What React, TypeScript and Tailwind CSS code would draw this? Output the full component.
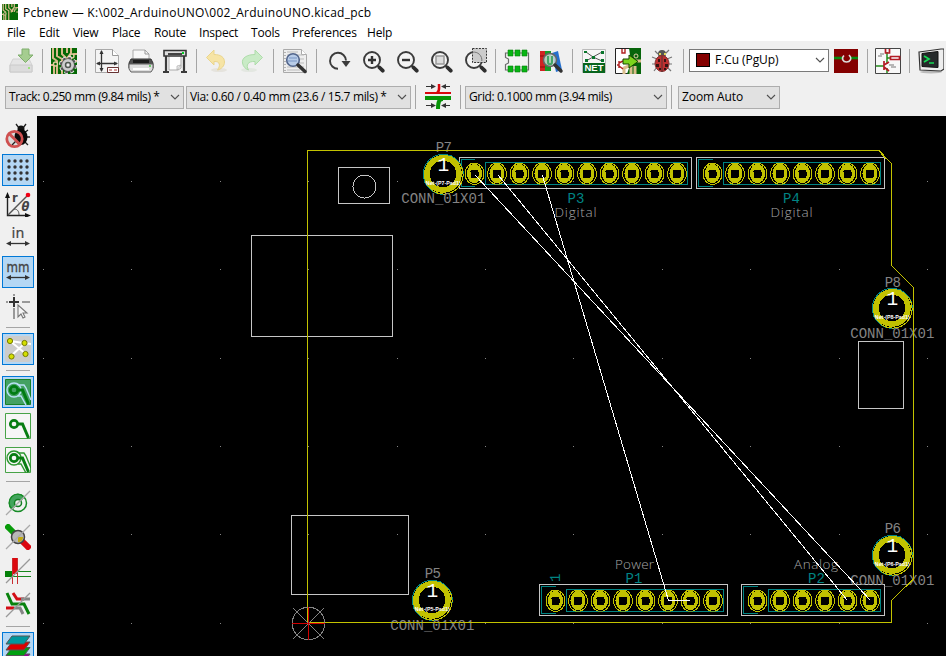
import React from 'react';

type Kids = { children?: React.ReactNode };

const Icon = ({ children }: Kids) => (
  <svg width="26" height="26" viewBox="0 0 26 26" fill="none" className="block shrink-0">{children}</svg>
);

const Tool = ({ children }: Kids) => (
  <div className="flex h-[34px] w-[34px] shrink-0 items-center justify-center"><Icon>{children}</Icon></div>
);

const Side = ({ children, active }: Kids & { active?: boolean }) => (
  <div className="flex h-[34px] w-[34px] shrink-0 items-center justify-center">
    <div className={active ? 'flex h-8 w-8 items-center justify-center border border-[#0078d7] bg-[#b4d7f4]' : 'flex h-8 w-8 items-center justify-center'}>
      <Icon>{children}</Icon>
    </div>
  </div>
);

const VSep = () => <div className="flex h-6 w-[9px] shrink-0 justify-center"><div className="h-full w-px bg-[#a5a5a5]" /></div>;
const HSep = () => <div className="flex h-[9px] w-[34px] shrink-0 items-center justify-center"><div className="h-px w-6 bg-[#a5a5a5]" /></div>;

const Chevron = () => (
  <svg width="10" height="6" viewBox="0 0 10 6" fill="none" className="block shrink-0"><path d="M1 1l4 4 4-4" stroke="#505050" strokeWidth="1.1" /></svg>
);

const Combo = ({ children, className }: Kids & { className: string }) => (
  <div className={'flex h-[23px] shrink-0 items-center justify-between border border-[#adadad] bg-[#e1e1e1] pl-[3px] pr-[3px] ' + className}>
    <span className="whitespace-pre">{children}</span><Chevron />
  </div>
);

const Lens = ({ children }: Kids) => (
  <g transform="translate(1 0)">
    <circle cx="12" cy="12" r="8" stroke="#3c3c3c" strokeWidth="1.9" fill="#f4f4f4" />
    <path d="M17.5 17.5l2 2" stroke="#3c3c3c" strokeWidth="2" />
    <path d="M19.500 19.500l3.200 3.200" stroke="#2e2e2e" strokeWidth="3.800" strokeLinecap="round" />
    {children}
  </g>
);

const Pcb = () => (
  <>
    <path d="M0 0h26v26H0z" fill="#056805" />
    <path d="M2 0v10l4 3v13M6 0v8l5 3v15M11 0v6l4 4v4M16 0v5M20 0v5l-3 4v4M26 6h-3l-3 3v4M0 17h3v9M26 13h-3" stroke="#d8b98a" strokeWidth="2" />
    <circle cx="4.5" cy="16" r="2" stroke="#e3cda2" strokeWidth="1.4" fill="#056805" />
    <circle cx="21" cy="8" r="2" stroke="#e3cda2" strokeWidth="1.4" fill="#056805" />
  </>
);

const Gear = () => (
  <>
    <circle cx="17" cy="17" r="7" stroke="#eee" strokeWidth="4" strokeDasharray="3.2 2.3" />
    <circle cx="17" cy="17" r="6.8" stroke="#555" strokeWidth="2.6" strokeDasharray="2.7 2.65" />
    <circle cx="17" cy="17" r="4.6" stroke="#555" strokeWidth="4.4" />
    <circle cx="17" cy="17" r="4.6" stroke="#ccc" strokeWidth="2.8" />
    <circle cx="17" cy="17" r="2.2" fill="#eee" stroke="#555" />
  </>
);

const TrackPad = ({ c, wide }: { c: string; wide?: string }) => (
  <>
    {wide && <><circle cx="9" cy="11" r="7" stroke={wide} strokeWidth="1.4" /><path d="M12 5l2 1h5l2 3 5 12M13 17h3l5 9" stroke={wide} strokeWidth="1.4" /></>}
    <circle cx="9" cy="11" r="3.7" stroke={c} strokeWidth="2.7" />
    <path d="M13 11h4.500l6 14" stroke={c} strokeWidth="3" />
  </>
);

const MainToolbar = () => (
  <div className="flex h-10 items-center pl-1">
    <Tool>
      <path d="M2 17l3-6h16l3 6v7H2z" fill="#e5e5e5" stroke="#d2d2d2" /><path d="M2 17h22v7H2z" fill="#dcdcdc" stroke="#cacaca" />
      <path d="M14 1h7v6h4l-7.500 7.500L10 7h4z" fill="#a5cd90" stroke="#7fae6c" /><circle cx="21" cy="20" r="1" fill="#86e65e" />
    </Tool>
    <VSep />
    <Tool><Pcb /><Gear /></Tool>
    <VSep />
    <Tool>
      <path d="M1.500 1.500h17l6 6v17h-23z" fill="#f4f4f4" stroke="#a9a9a9" /><path d="M18.500 1.500v6h6" fill="#fff" stroke="#999" />
      <path d="M7.500 3v20M3 15.500h20" stroke="#333" strokeWidth="1.300" />
      <path d="M7.500 2l-2 4h4zM7.500 24l-2-4h4zM2 15.500l4-2v4zM24 15.500l-4-2v4z" fill="#333" />
      <path d="M13.500 19.500h11v5h-11z" fill="#fff" stroke="#633" /><path d="M15 22h3M20 22h3" stroke="#a33" />
    </Tool>
    <Tool>
      <path d="M5 12V2h12l4 4v6z" fill="#f8f8f8" stroke="#aaa" /><path d="M17 2v4h4" stroke="#999" />
      <path d="M3 11h20l2 4v5H1v-5z" fill="#505050" stroke="#333" /><path d="M5 12h16v3H5z" fill="#1d1d1d" />
      <path d="M1 16h24v5l-2 3H3l-2-3z" fill="#dedede" stroke="#5e5e5e" /><path d="M5 21h16" stroke="#fff" strokeWidth="2" /><circle cx="22" cy="18" r="1" fill="#46c846" />
    </Tool>
    <Tool>
      <path d="M4 8v15M22 8v15M1 24h6M19 24h6" stroke="#3b3b3b" strokeWidth="2.200" />
      <path d="M7 7h12v13l-3 2H7z" fill="#fff" stroke="#aaa" /><path d="M19 17l-4 5v-4z" fill="#eee" stroke="#aaa" strokeWidth=".7" />
      <path d="M2 2.500h22v5.500h-22z" fill="#ddd" stroke="#353535" strokeWidth="1.600" /><path d="M6 6h14" stroke="#444" strokeWidth="2" /><path d="M20 4h2v2h-2z" fill="#0c2" />
    </Tool>
    <VSep />
    <Tool><ellipse cx="14" cy="22" rx="8" ry="2" fill="#e5e3dd" /><path d="M1.500 9.500L9 2v4.500c7 0 10.500 3 10.500 7.500 0 4-3 7-7 8 3-4 3-9-3.500-8.500V17z" fill="#f6e4a5" stroke="#ead58d" /></Tool>
    <Tool><ellipse cx="10" cy="22" rx="8" ry="2" fill="#e3e7e1" /><path d="M23.500 9.500L16 2v4.500C8 6.500 2.500 10 3.500 15c.5 3.500 3 6 6 7-3-5-.5-9 6.500-8.500V17z" fill="#c9ebc6" stroke="#aedcaa" /></Tool>
    <VSep />
    <Tool>
      <path d="M1.500 1.500h18l5 5v18h-23z" fill="#eee" stroke="#aaa" /><path d="M19.500 1.500v5h5" fill="#fff" stroke="#aaa" /><path d="M5 4h11M5 7h17M5 11h17M5 15h17M5 19h17M5 22h13" stroke="#bbb" /><path d="M3 4v20" stroke="#777" strokeDasharray="1 2" />
      <circle cx="11" cy="12" r="6.300" fill="#b8cce8" stroke="#52658b" strokeWidth="1.600" /><path d="M7 10h8M6 13h9" stroke="#7895c4" /><path d="M16 17l7 6.500" stroke="#333" strokeWidth="3.500" strokeLinecap="round" />
    </Tool>
    <VSep />
    <Tool><path d="M13 20.800A8 8 0 1 1 21 12.500" stroke="#3b3b3b" strokeWidth="1.900" /><path d="M16.500 13h9L21 19z" fill="#3b3b3b" /></Tool>
    <Tool><Lens><path d="M8 12h8M12 8v8" stroke="#333" strokeWidth="2.400" /></Lens></Tool>
    <Tool><Lens><path d="M8 12h8" stroke="#333" strokeWidth="2.400" /></Lens></Tool>
    <Tool><Lens><path d="M8 8h8v8H8z" fill="#ddd" stroke="#999" strokeWidth="1.500" /></Lens></Tool>
    <Tool><Lens><path d="M10.500 .5h14v14h-14z" fill="#ccc" stroke="#333" strokeDasharray="2 1.200" /><path d="M10.500 4.200A8 8 0 0 1 19.800 13" stroke="#777" /></Lens></Tool>
    <VSep />
    <Tool>
      <path d="M1.500 5v4.500l3 1.500v4l-3 1.500V22h23V5z" fill="#f3f3f3" stroke="#6b6b6b" strokeWidth="1.200" />
      <path d="M4 2h5v6H4zM11 2h5v6h-5zM18 2h5v6h-5zM4 18h5v6H4zM11 18h5v6h-5zM18 18h5v6h-5z" fill="#07b513" stroke="#087d0b" strokeWidth=".6" />
    </Tool>
    <Tool>
      <path d="M2 3h5v20H2z" fill="#d12222" /><path d="M7 3h6v20H7z" fill="#159b28" /><path d="M14 5l6-2 4 19-6 2z" fill="#2670ce" /><path d="M2 8h5M2 19h5" stroke="#8b0b0b" />
      <circle cx="12" cy="12" r="6.500" fill="#cbd8d2" fillOpacity=".85" stroke="#666" strokeWidth="1.500" /><path d="M10 8v6c0 3 4 3 4 0V8" stroke="#43a566" strokeWidth="2" /><path d="M17 17l6 6" stroke="#333" strokeWidth="3.500" strokeLinecap="round" />
    </Tool>
    <VSep />
    <Tool>
      <path d="M1.500 1.500h23v23h-23z" fill="#f6f6f6" stroke="#bbb" /><path d="M5 4l7 5 9-5M12 9l-7 4M12 9l9 4" stroke="#555" /><path d="M3 3h3v2H3zM20 3h3v3h-3zM4 11h3v3H4zM11 8h3v3h-3zM20 11h3v3h-3z" fill="#08752b" />
      <path d="M2 15h22v10H2z" fill="#08651d" /><text x="13" y="23.300" textAnchor="middle" fontFamily="Liberation Sans" fontWeight="bold" fontSize="9.500" fill="#fff">NET</text>
    </Tool>
    <Tool>
      <path d="M.5.5h25v25H.5z" fill="#fff" stroke="#222" /><path d="M14 0h12v26H12l4-12z" fill="#07650b" /><path d="M16 13h10M9 26v-6l7-3v9M20 18v8" stroke="#d9bd8b" strokeWidth="3" /><circle cx="21" cy="8" r="2" stroke="#e3cfa8" /><path d="M7 1v4h3V1M4 13v7M4 15l4-2M4 18l4 3M2 17h2" stroke="#b02020" strokeWidth="1.400" />
      <path d="M8 11h6V7l9 6.500-9 6.500v-4H8z" fill="#7bd41d" stroke="#174400" />
    </Tool>
    <Tool>
      <path d="M6 3l3 3M20 2l-4 4M3 9l5 2M23 9l-5 2M3 16h4M23 16h-4M5 23l3-4M22 23l-4-4" stroke="#777" strokeWidth="1.200" /><circle cx="13" cy="6" r="4" fill="#555" /><path d="M10 5h2v2h-2zM15 5h2v2h-2z" fill="#e0d65a" />
      <ellipse cx="13" cy="15.500" rx="7" ry="8" fill="#bd3030" stroke="#853030" /><path d="M13 8v16" stroke="#533" /><path d="M9 11h2v3H9zM15 11h2v3h-2zM7 16h3v3H7zM16 16h3v3h-3zM10 20h2v2h-2zM15 20h2v2h-2z" fill="#371414" />
    </Tool>
    <VSep />
    <div className="ml-px mt-[-2px] flex h-[23px] w-[140px] shrink-0 items-center border border-[#7a7a7a] bg-white pl-1.5 pr-[3px]">
      <div className="h-[14px] w-[14px] border border-black bg-[#840000]" />
      <span className="ml-[5px] grow text-[12px] tracking-[-0.07px]">F.Cu (PgUp)</span><Chevron />
    </div>
    <Tool><path d="M1 1h24v24H1z" fill="#840000" /><path d="M1 10h24" stroke="#08890e" strokeWidth="2.600" /><path d="M9 7h9v7H9z" fill="#840000" /><path d="M11 7.500c-3 3-1 6.500 2.500 6.500s6-3.500 2.500-7" stroke="#ddd" strokeWidth="1.600" /></Tool>
    <VSep />
    <div className="ml-[-1px]"><Tool>
      <path d="M.5.5h25v25H.5z" fill="#f8f8f8" stroke="#454545" /><path d="M12 4v12M12 10h4M1 18h8M12 20v5" stroke="#238c1a" strokeWidth="1.500" /><path d="M10.500 1v4h4V1M15.500 8.500h9v3h-9zM9 13v9M9 17l5-3M9 19l5 4" stroke="#b21b24" strokeWidth="1.700" /><path d="M5 6h4M3 8h4M14 17h5M16 19h5" stroke="#777" />
    </Tool></div>
    <VSep />
    <Tool>
      <ellipse cx="13" cy="24" rx="11" ry="1.500" fill="#bbb" /><path d="M1 4l22-3h3v20l-3 2-21-1z" fill="#eee" stroke="#333" strokeWidth="1.200" /><path d="M4 5.500l16-2v16L4 18.500z" fill="#262a2b" stroke="#111" /><path d="M6 8l5 3-5 3M11 15h5" stroke="#15dc55" strokeWidth="1.700" />
    </Tool>
  </div>
);

const SideToolbar = () => (
  <aside className="flex w-[37px] shrink-0 flex-col overflow-hidden bg-[#f0f0f0] pl-px pt-[3px]">
    <Side>
      <path d="M11 1l3 4M21 1l-3 4M23 7l-4 3M25 14h-5M23 22l-4-4M7 22l4-4" stroke="#222" strokeWidth="1.300" /><circle cx="16" cy="6" r="3.500" fill="#111" /><ellipse cx="16" cy="14" rx="6.500" ry="8" fill="#080808" />
      <circle cx="9.500" cy="16" r="7.700" stroke="#cf5050" strokeWidth="2.800" fill="#222" fillOpacity=".1" /><path d="M4.500 11l10 10" stroke="#cf5050" strokeWidth="2.800" />
    </Side>
    <Side active>{[4, 10, 16, 22].map(y => [4, 10, 16, 22].map(x => <circle key={x + '-' + y} cx={x} cy={y} r="1.700" fill="#333" />))}</Side>
    <Side>
      <path d="M2.500 5v19.500H22" stroke="#222" strokeWidth="1.400" /><path d="M2.500 1L0 7h5zM26 24.500l-6-2.500v5z" fill="#111" /><path d="M3 24L22 5" stroke="#555" strokeWidth="1.500" /><path d="M9 18c4 0 5 3 5 6" stroke="#555" /><circle cx="23" cy="4" r="2.300" fill="#f00015" />
      <text x="7" y="10.500" fontFamily="DejaVu Sans" fontWeight="bold" fontSize="11.500" fill="#444">r</text><text x="16.500" y="20" fontFamily="DejaVu Sans" fontWeight="bold" fontStyle="italic" fontSize="11.500" fill="#444">θ</text>
    </Side>
    <Side>
      <text x="13" y="13" textAnchor="middle" fontFamily="DejaVu Sans" fontSize="14" fill="#444" stroke="#444" strokeWidth=".2">in</text><path d="M5 18.500h16" stroke="#333" strokeWidth="1.300" /><path d="M1 18.500l5-2.500v5zM25 18.500L20 16v5z" fill="#333" />
    </Side>
    <Side active>
      <text x="13" y="13" textAnchor="middle" textLength="23" lengthAdjust="spacingAndGlyphs" fontFamily="DejaVu Sans" fontSize="13.500" fill="#444" stroke="#444" strokeWidth=".3">mm</text><path d="M5 18.500h16" stroke="#333" strokeWidth="1.300" /><path d="M1 18.500l5-2.500v5zM25 18.500L20 16v5z" fill="#333" />
    </Side>
    <Side>
      <path d="M9 1v2M9 15v11M1 9h2M17 9h8" stroke="#999" strokeWidth="2" /><path d="M9 4v10M4 9h10" stroke="#333" strokeWidth="2" /><path d="M13 12v12l3-3 2 4 2-1-2-4h4z" fill="#f5f5f5" stroke="#777" strokeWidth="1.100" />
    </Side>
    <HSep />
    <Side active><rect width="26" height="26" rx="3" fill="#ccc" /><path d="M5 5l21 3M5 5l16 13M20 7L6 20" stroke="#fff" strokeWidth="2" /><g fill="#d4df00" stroke="#777b00"><circle cx="5" cy="5" r="2.600" /><circle cx="19.500" cy="7" r="2.600" /><circle cx="6.500" cy="20.500" r="2.600" /><circle cx="20.500" cy="18" r="2.600" /></g></Side>
    <HSep />
    <Side active><path d="M.5.5h25v25H.5z" fill="#44a163" stroke="#178126" /><TrackPad c="#007c13" wide="#b8e1f4" /></Side>
    <Side><path d="M.5.5h25v25H.5z" fill="#f6f6f6" stroke="#47a347" /><TrackPad c="#087d12" /></Side>
    <Side><path d="M.5.5h25v25H.5z" fill="#f6f6f6" stroke="#47a347" /><TrackPad c="#087d12" wide="#2c972f" /></Side>
    <HSep />
    <Side><circle cx="13" cy="13" r="8.500" fill="#f2f2f2" stroke="#168b26" strokeWidth="1.500" /><path d="M19 7A8.500 8.500 0 1 0 7 19z" fill="#42a45c" stroke="#168b26" strokeWidth="1.400" /><circle cx="13" cy="13" r="3.500" stroke="#127e22" strokeWidth="1.500" fill="#eee" /><path d="M1 25L25 1" stroke="#aaa" strokeWidth="1.300" /></Side>
    <Side><path d="M1 1l9 9" stroke="#089b0a" strokeWidth="6" /><path d="M16 16l9 9" stroke="#db0710" strokeWidth="6" /><circle cx="13" cy="13" r="6.500" fill="#b8b8b8" stroke="#444" strokeWidth="1.500" /><path d="M13 18v-5h5c0 3-2 5-5 5z" fill="#c2aa10" /><path d="M1 25L25 1" stroke="#aaa" strokeWidth="1.300" /></Side>
    <Side><path d="M0 13.500h26M0 18.500h26" stroke="#16861b" /><path d="M0 13h8v6H0z" fill="#048009" /><path d="M7 0h6v16H7z" fill="#dc090f" /><path d="M7.500 0v26M12.500 0v26" stroke="#c82d30" /><path d="M1 25L25 1" stroke="#999" strokeWidth="1.300" /></Side>
    <Side><path d="M8 1l4 6h7M1 16h8" stroke="#d30d15" strokeWidth="3" /><path d="M16 7h9M9 16h6l3 6" stroke="#858585" strokeWidth="3" /><path d="M2 1l5 11h12l5 10" stroke="#09820d" strokeWidth="3" /><path d="M1 25L25 1" stroke="#999" strokeWidth="1.300" /></Side>
    <HSep />
    <Side active><g stroke="#555"><path d="M1 27l6-8h18l-6 8z" fill="#9b009b" /><path d="M1 20.500l6-8h18l-6 8z" fill="#00a010" /><path d="M1 15l6-8h18l-6 8z" fill="#dc0000" /><path d="M1 9l6-8h18l-6 8z" fill="#00989e" /></g></Side>
  </aside>
);

const PinHeader = ({ x, y, w, count, first, box }: { x: number; y: number; w: number; count: number; first: number; box: number }) => (
  <g shapeRendering="crispEdges" fill="none">
    <rect x={x} y={y} width={w} height="31" stroke="#c6c6c6" />
    <path d={`M${first} ${y + 2}H${x + 2}V${y + 29}H${first}`} stroke="#008484" />
    <path d={`M${box} ${y + 5}H${x + w - 4}V${y + 27}H${box}z`} stroke="#008484" />
    {Array.from({ length: count }, (_, i) => {
      const cx = first + i * 22.5;
      return <g key={i}>
        <ellipse cx={cx} cy={y + 16.3} rx="9.500" ry="10.700" stroke="#c2c200" fill="#000" />
        <ellipse cx={cx} cy={y + 16} rx="7.500" ry="9.700" fill="#c2c200" />
        <rect x={cx - 4} y={y + 12} width="8" height="8.500" rx="2" fill="#000" />
      </g>;
    })}
    <path d={`M${box + 3} ${y + 5}H${x + w - 4}M${box + 3} ${y + 27}H${x + w - 4}`} stroke="#008484" strokeOpacity=".5" />
  </g>
);

const MountPad = ({ x, y, name, ty, by }: { x: number; y: number; name: string; ty: number; by: number }) => (
  <g>
    <g shapeRendering="crispEdges" fill="none">
      <circle cx={x} cy={y} r="20" stroke="#008484" fill="#000" />
      <circle cx={x + .5} cy={y + .5} r="19.300" stroke="#c2c200" />
      <circle cx={x - .3} cy={y - .3} r="16" stroke="#c2c200" strokeWidth="5.500" />
    </g>
    <text x={x} y={y - 3.3} textAnchor="middle" fontSize="19.500" fill="#fff">1</text>
    <text x={x} y={y + 11} textAnchor="middle" fontFamily="Liberation Sans" fontWeight="bold" fontSize="6" textLength="35" lengthAdjust="spacingAndGlyphs" fill="#fff">{`Net-(${name}-Pad1)`}</text>
    <text x={x - 7.5} y={ty} textLength="16" fontSize="14" fill="#848484">{name}</text>
    <text x={x - 42} y={by} textLength="84" fontSize="14" fill="#848484">CONN_01X01</text>
  </g>
);

const GRID_X = [43, 131, 220, 308, 397, 485, 573, 662, 750, 839, 927];
const GRID_Y = [181, 269, 358, 446, 534, 623];

const Board = () => (
  <svg width="909" height="540" viewBox="37 116 909 540" className="block shrink-0 bg-black" fontFamily="Liberation Mono, monospace">
    {GRID_X.map(x => GRID_Y.map(y => <rect key={x + '-' + y} x={x} y={y} width="1" height="1" fill="#848484" />))}
    <g shapeRendering="crispEdges" fill="none" stroke="#c6c6c6">
      <rect x="338.500" y="167.500" width="51" height="36" /><circle cx="364.500" cy="186.500" r="11.500" />
      <rect x="251.500" y="235.500" width="141" height="101" /><rect x="291.500" y="515.500" width="117" height="79" /><rect x="858.500" y="341.500" width="45" height="67" />
    </g>
    <PinHeader x={459.5} y={157.5} w={232} count={10} first={474.5} box={485.5} />
    <PinHeader x={696.5} y={157.5} w={188} count={8} first={712.5} box={723.5} />
    <PinHeader x={539.5} y={584.5} w={188} count={8} first={555.5} box={566.5} />
    <PinHeader x={741.5} y={584.5} w={143} count={6} first={757.5} box={768.5} />
    <MountPad x={443.3} y={174.3} name="P7" ty={151.5} by={203} />
    <MountPad x={892.3} y={308.3} name="P8" ty={287} by={338} />
    <MountPad x={432.3} y={600.3} name="P5" ty={578} by={630} />
    <MountPad x={892.3} y={555.3} name="P6" ty={533} by={585} />
    <path d="M307.500 150.500H879L891.500 163.500V265.500L913.500 287.500V579L891.500 600.500V622.500H307.500zM881.500 154.500L889 161" shapeRendering="crispEdges" fill="none" stroke="#c2c200" />
    <g fontSize="14" fill="#008484">
      <text x="567.500" y="203" textLength="17">P3</text><text x="783" y="203" textLength="17">P4</text><text x="625.500" y="583" textLength="17">P1</text><text x="808" y="583" textLength="17">P2</text>
      <text transform="translate(560 582) rotate(-90)">1</text>
    </g>
    <g fontSize="13.500" fill="#a6a6a6" fontFamily="Open Sans, sans-serif" fontWeight="300">
      <text x="554.500" y="217" textLength="42">Digital</text><text x="770.500" y="217" textLength="42">Digital</text><text x="615" y="569" textLength="39">Power</text><text x="794" y="569" textLength="44">Analog</text>
    </g>
    <g shapeRendering="crispEdges" fill="none">
      <circle cx="308.500" cy="623.500" r="16.300" stroke="#848484" /><path d="M293 608l31 31M324 608l-31 31" stroke="#848484" /><path d="M292 623.500h33M308.500 607v33" stroke="#d00000" />
      <path d="M475.500 175.500L870.500 600.500M498.500 175.500L847.500 600.500M542.500 175.500L668.500 600.500H690" stroke="#fff" />
    </g>
  </svg>
);

export default function App() {
  return (
    <div className="flex h-[656px] w-[946px] flex-col overflow-hidden bg-white font-['Open_Sans',sans-serif] text-[12px] text-black">
      <header className="flex h-6 items-center gap-[5px] pl-0.5">
        <svg width="16" height="16" viewBox="0 0 26 26" fill="none" className="mb-px"><Pcb /></svg>
        <span className="relative top-px whitespace-pre tracking-[0.27px]">Pcbnew — K:\002_ArduinoUNO\002_ArduinoUNO.kicad_pcb</span>
      </header>
      <nav className="flex h-[17px] items-center pl-[7px] tracking-[-0.2px]">
        <span className="w-8">File</span><span className="w-[34px]">Edit</span><span className="w-[39px]">View</span><span className="w-[42px]">Place</span><span className="w-[45px]">Route</span><span className="w-[52px]">Inspect</span><span className="w-[41px]">Tools</span><span className="w-[75px]">Preferences</span><span>Help</span>
      </nav>
      <div className="h-[75px] shrink-0 bg-[#f0f0f0]">
        <MainToolbar />
        <div className="mt-[3px] flex items-center pl-[5px]">
          <Combo className="w-[179px] tracking-[-0.4px]">Track: 0.250 mm (9.84 mils) *</Combo>
          <Combo className="ml-0.5 w-[225px] tracking-[-0.35px]">Via: 0.60 / 0.40 mm (23.6 / 15.7 mils) *</Combo>
          <VSep />
          <div className="mx-[5px]"><Icon>
            <path d="M0 9h26" stroke="#d9070d" strokeWidth="2" /><path d="M0 14h26" stroke="#089408" strokeWidth="4" /><path d="M12 9c3-2 2-4 2-9" stroke="#d9070d" strokeWidth="2.500" /><path d="M18 15c-4 0-5 3-5 10" stroke="#089408" strokeWidth="4" /><path d="M1 2.500h8M17 2.500h8M1 21.500h8M17 21.500h8" stroke="#333" /><path d="M6 0l5 2.500-5 2.500zM21 0l-5 2.500 5 2.500zM6 19l5 2.500-5 2.500zM21 19l-5 2.500 5 2.500z" fill="#333" />
          </Icon></div>
          <VSep />
          <Combo className="w-[202px] tracking-[-0.37px]">Grid: 0.1000 mm (3.94 mils)</Combo>
          <VSep />
          <Combo className="ml-0.5 w-[102px] tracking-[-0.1px]">Zoom Auto</Combo>
        </div>
      </div>
      <main className="flex h-[540px] shrink-0"><SideToolbar /><Board /></main>
    </div>
  );
}
